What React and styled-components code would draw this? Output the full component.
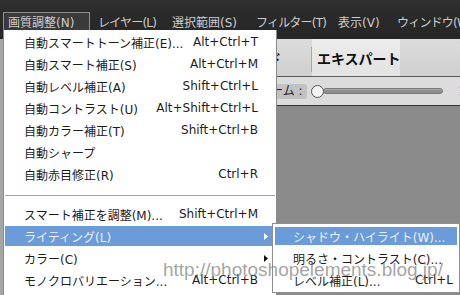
import React from "react";
import styled, { createGlobalStyle, css } from "styled-components";

const GlobalStyle = createGlobalStyle`
  html, body { margin: 0; padding: 0; background: #262626; }
  body { font-family: "DejaVu Sans", "Noto Sans CJK JP", sans-serif; }
`;

const Screen = styled.div`
  position: relative;
  width: 460px;
  height: 295px;
  overflow: hidden;
  display: flex;
  flex-direction: column;
  background: #8b8b8b;
`;

const MenuBar = styled.div`
  flex: none;
  height: 39px;
  box-sizing: border-box;
  display: flex;
  align-items: flex-start;
  padding: 12px 0 0 3px;
  background: linear-gradient(#323232 0, #2b2b2b 11px, #262626 100%);
`;

const MenuTitle = styled.div`
  flex: none;
  width: ${(p) => p.w}px;
  height: 18px;
  margin-right: 3px;
  padding-left: 5px;
  box-sizing: border-box;
  display: flex;
  align-items: center;
  font-size: 12px;
  letter-spacing: ${(p) => (p.tight ? "-0.8px" : "0")};
  color: #cdcdcd;
  white-space: nowrap;
  ${(p) =>
    p.active &&
    css`
      padding-left: 4px;
      background: #3a3a3a;
      border: 1px solid #8e8e8e;
      border-bottom: none;
    `}
`;

const Workspace = styled.div`
  flex: 1;
  display: flex;
  min-height: 0;
`;

const SidePanel = styled.div`
  flex: none;
  width: 3px;
  background: #a5a5a5;
`;

const Main = styled.div`
  flex: 1;
  display: flex;
  flex-direction: column;
  min-width: 0;
`;

const TabBar = styled.div`
  flex: none;
  height: 38px;
  box-sizing: border-box;
  display: flex;
  align-items: stretch;
  padding-left: 130px;
  background: linear-gradient(#dcdcdc, #cfcfcf);
  border-bottom: 1px solid #5c5c5c;
`;

const Tab = styled.div`
  flex: none;
  display: flex;
  align-items: center;
  font-family: "Noto Sans CJK JP", sans-serif;
  font-size: 14px;
  font-weight: 700;
  color: #111;
  white-space: nowrap;
  padding: 0 30px 0 10px;
  ${(p) =>
    p.active &&
    css`
      width: 88px;
      box-sizing: border-box;
      padding: 0 3px 0 5px;
      background: linear-gradient(#ececec, #e2e2e2);
    `}
`;

const TabDivider = styled.div`
  flex: none;
  width: 1px;
  margin: 8px 0 4px;
  background: #a9a9a9;
`;

const OptionsBar = styled.div`
  flex: none;
  height: 29px;
  box-sizing: border-box;
  display: flex;
  align-items: center;
  padding-left: 252px;
  background: #dcdcdc;
  border-bottom: 1px solid #333;
`;

const ZoomLabel = styled.div`
  flex: none;
  font-size: 12px;
  color: #222;
  background: #c2c2c2;
  border-radius: 3px;
  padding: 0 4px;
  line-height: 15px;
  white-space: nowrap;
`;

const Slider = styled.div`
  flex: none;
  display: flex;
  align-items: center;
  width: 132px;
  margin-left: 4px;
`;

const Knob = styled.div`
  flex: none;
  width: 11px;
  height: 11px;
  border-radius: 50%;
  background: #f4f4f4;
  border: 1px solid #555;
  z-index: 1;
`;

const Track = styled.div`
  flex: 1;
  height: 4px;
  margin-left: -1px;
  border-radius: 3px;
  background: #8e8e8e;
  border: 1px solid #7a7a7a;
  box-shadow: inset 0 1px 0 #a8a8a8;
`;

const ZoomValue = styled.div`
  flex: none;
  margin-left: 16px;
  font-size: 12px;
  color: #111;
`;

const Canvas = styled.div`
  flex: 1;
  background: #8b8b8b;
`;

const Dropdown = styled.div`
  position: absolute;
  left: 3px;
  top: 30px;
  width: 274px;
  height: 272px;
  box-sizing: border-box;
  background: #fff;
  border: 1px solid #8a8a8a;
  border-top: none;
  padding-top: 1px;
`;

const Row = styled.div`
  height: 22px;
  display: flex;
  align-items: center;
  padding-left: 20px;
  font-size: 12px;
  color: ${(p) => (p.hot ? "#eaf1fc" : "#1c1c1c")};
  white-space: nowrap;
  ${(p) =>
    p.hot &&
    css`
      background: #6b9bd9;
      box-shadow: inset 0 0 0 ${p.inset}px #fff;
    `}
`;

const Label = styled.span`
  flex: 1;
`;

const Shortcut = styled.span`
  flex: none;
`;

const Trail = styled.span`
  flex: none;
  width: ${(p) => p.w}px;
  display: flex;
  align-items: center;
  padding-left: 6px;
  box-sizing: border-box;
`;

const Separator = styled.div`
  height: 1px;
  margin: 10px 1px 7px;
  background: #a3a3a3;
`;

const Submenu = styled.div`
  position: absolute;
  left: 268px;
  top: 193px;
  width: 188px;
  box-sizing: border-box;
  background: #fff;
  border: 1px solid #8f8f8f;
  padding: 1px 0;
`;

const Watermark = styled.div`
  position: absolute;
  left: 163px;
  top: 260px;
  font-family: "Liberation Sans", Arial, sans-serif;
  font-size: 19px;
  line-height: 19px;
  color: rgba(105, 105, 105, 0.62);
  white-space: nowrap;
  pointer-events: none;
`;

const Arrow = ({ color }) => (
  <svg width="4" height="7" viewBox="0 0 4 7">
    <path d="M0 0 L4 3.5 L0 7 Z" fill={color} />
  </svg>
);

const titles = [
  { text: "画質調整(N)", w: 87, active: true },
  { text: "レイヤー(L)", w: 71, tight: true },
  { text: "選択範囲(S)", w: 81 },
  { text: "フィルター(T)", w: 79, tight: true },
  { text: "表示(V)", w: 56 },
  { text: "ウィンドウ(W)", w: 80, tight: true },
];

const topItems = [
  ["自動スマートトーン補正(E)...", "Alt+Ctrl+T"],
  ["自動スマート補正(S)", "Alt+Ctrl+M"],
  ["自動レベル補正(A)", "Shift+Ctrl+L"],
  ["自動コントラスト(U)", "Alt+Shift+Ctrl+L"],
  ["自動カラー補正(T)", "Shift+Ctrl+B"],
  ["自動シャープ", ""],
  ["自動赤目修正(R)", "Ctrl+R"],
];

const bottomItems = [
  { label: "スマート補正を調整(M)...", key: "Shift+Ctrl+M" },
  { label: "ライティング(L)", sub: true, hot: true },
  { label: "カラー(C)", sub: true },
  { label: "モノクロバリエーション...", key: "Alt+Ctrl+B" },
];

const subItems = [
  { label: "シャドウ・ハイライト(W)...", hot: true },
  { label: "明るさ・コントラスト(C)..." },
  { label: "レベル補正(L)...", key: "Ctrl+L" },
];

export default function App() {
  return (
    <>
      <GlobalStyle />
      <Screen>
        <MenuBar>
          {titles.map((t) => (
            <MenuTitle key={t.text} w={t.w} active={t.active} tight={t.tight}>
              {t.text}
            </MenuTitle>
          ))}
        </MenuBar>
        <Workspace>
          <SidePanel />
          <Main>
            <TabBar>
              <Tab>クイック</Tab>
              <Tab>ガイド</Tab>
              <TabDivider />
              <Tab active>エキスパート</Tab>
            </TabBar>
            <OptionsBar>
              <ZoomLabel>ズーム :</ZoomLabel>
              <Slider>
                <Knob />
                <Track />
              </Slider>
              <ZoomValue>100%</ZoomValue>
            </OptionsBar>
            <Canvas />
          </Main>
        </Workspace>

        <Dropdown>
          {topItems.map(([label, key]) => (
            <Row key={label}>
              <Label>{label}</Label>
              <Shortcut>{key}</Shortcut>
              <Trail w={18} />
            </Row>
          ))}
          <Separator />
          {bottomItems.map((it) => (
            <Row key={it.label} hot={it.hot} inset={1}>
              <Label>{it.label}</Label>
              <Shortcut>{it.key}</Shortcut>
              <Trail w={18}>
                {it.sub && <Arrow color={it.hot ? "#fff" : "#111"} />}
              </Trail>
            </Row>
          ))}
          <Submenu>
            {subItems.map((it) => (
              <Row key={it.label} hot={it.hot} inset={2}>
                <Label>{it.label}</Label>
                <Shortcut>{it.key}</Shortcut>
                <Trail w={6} />
              </Row>
            ))}
          </Submenu>
        </Dropdown>

        <Watermark>http://photoshopelements.blog.jp/</Watermark>
      </Screen>
    </>
  );
}
